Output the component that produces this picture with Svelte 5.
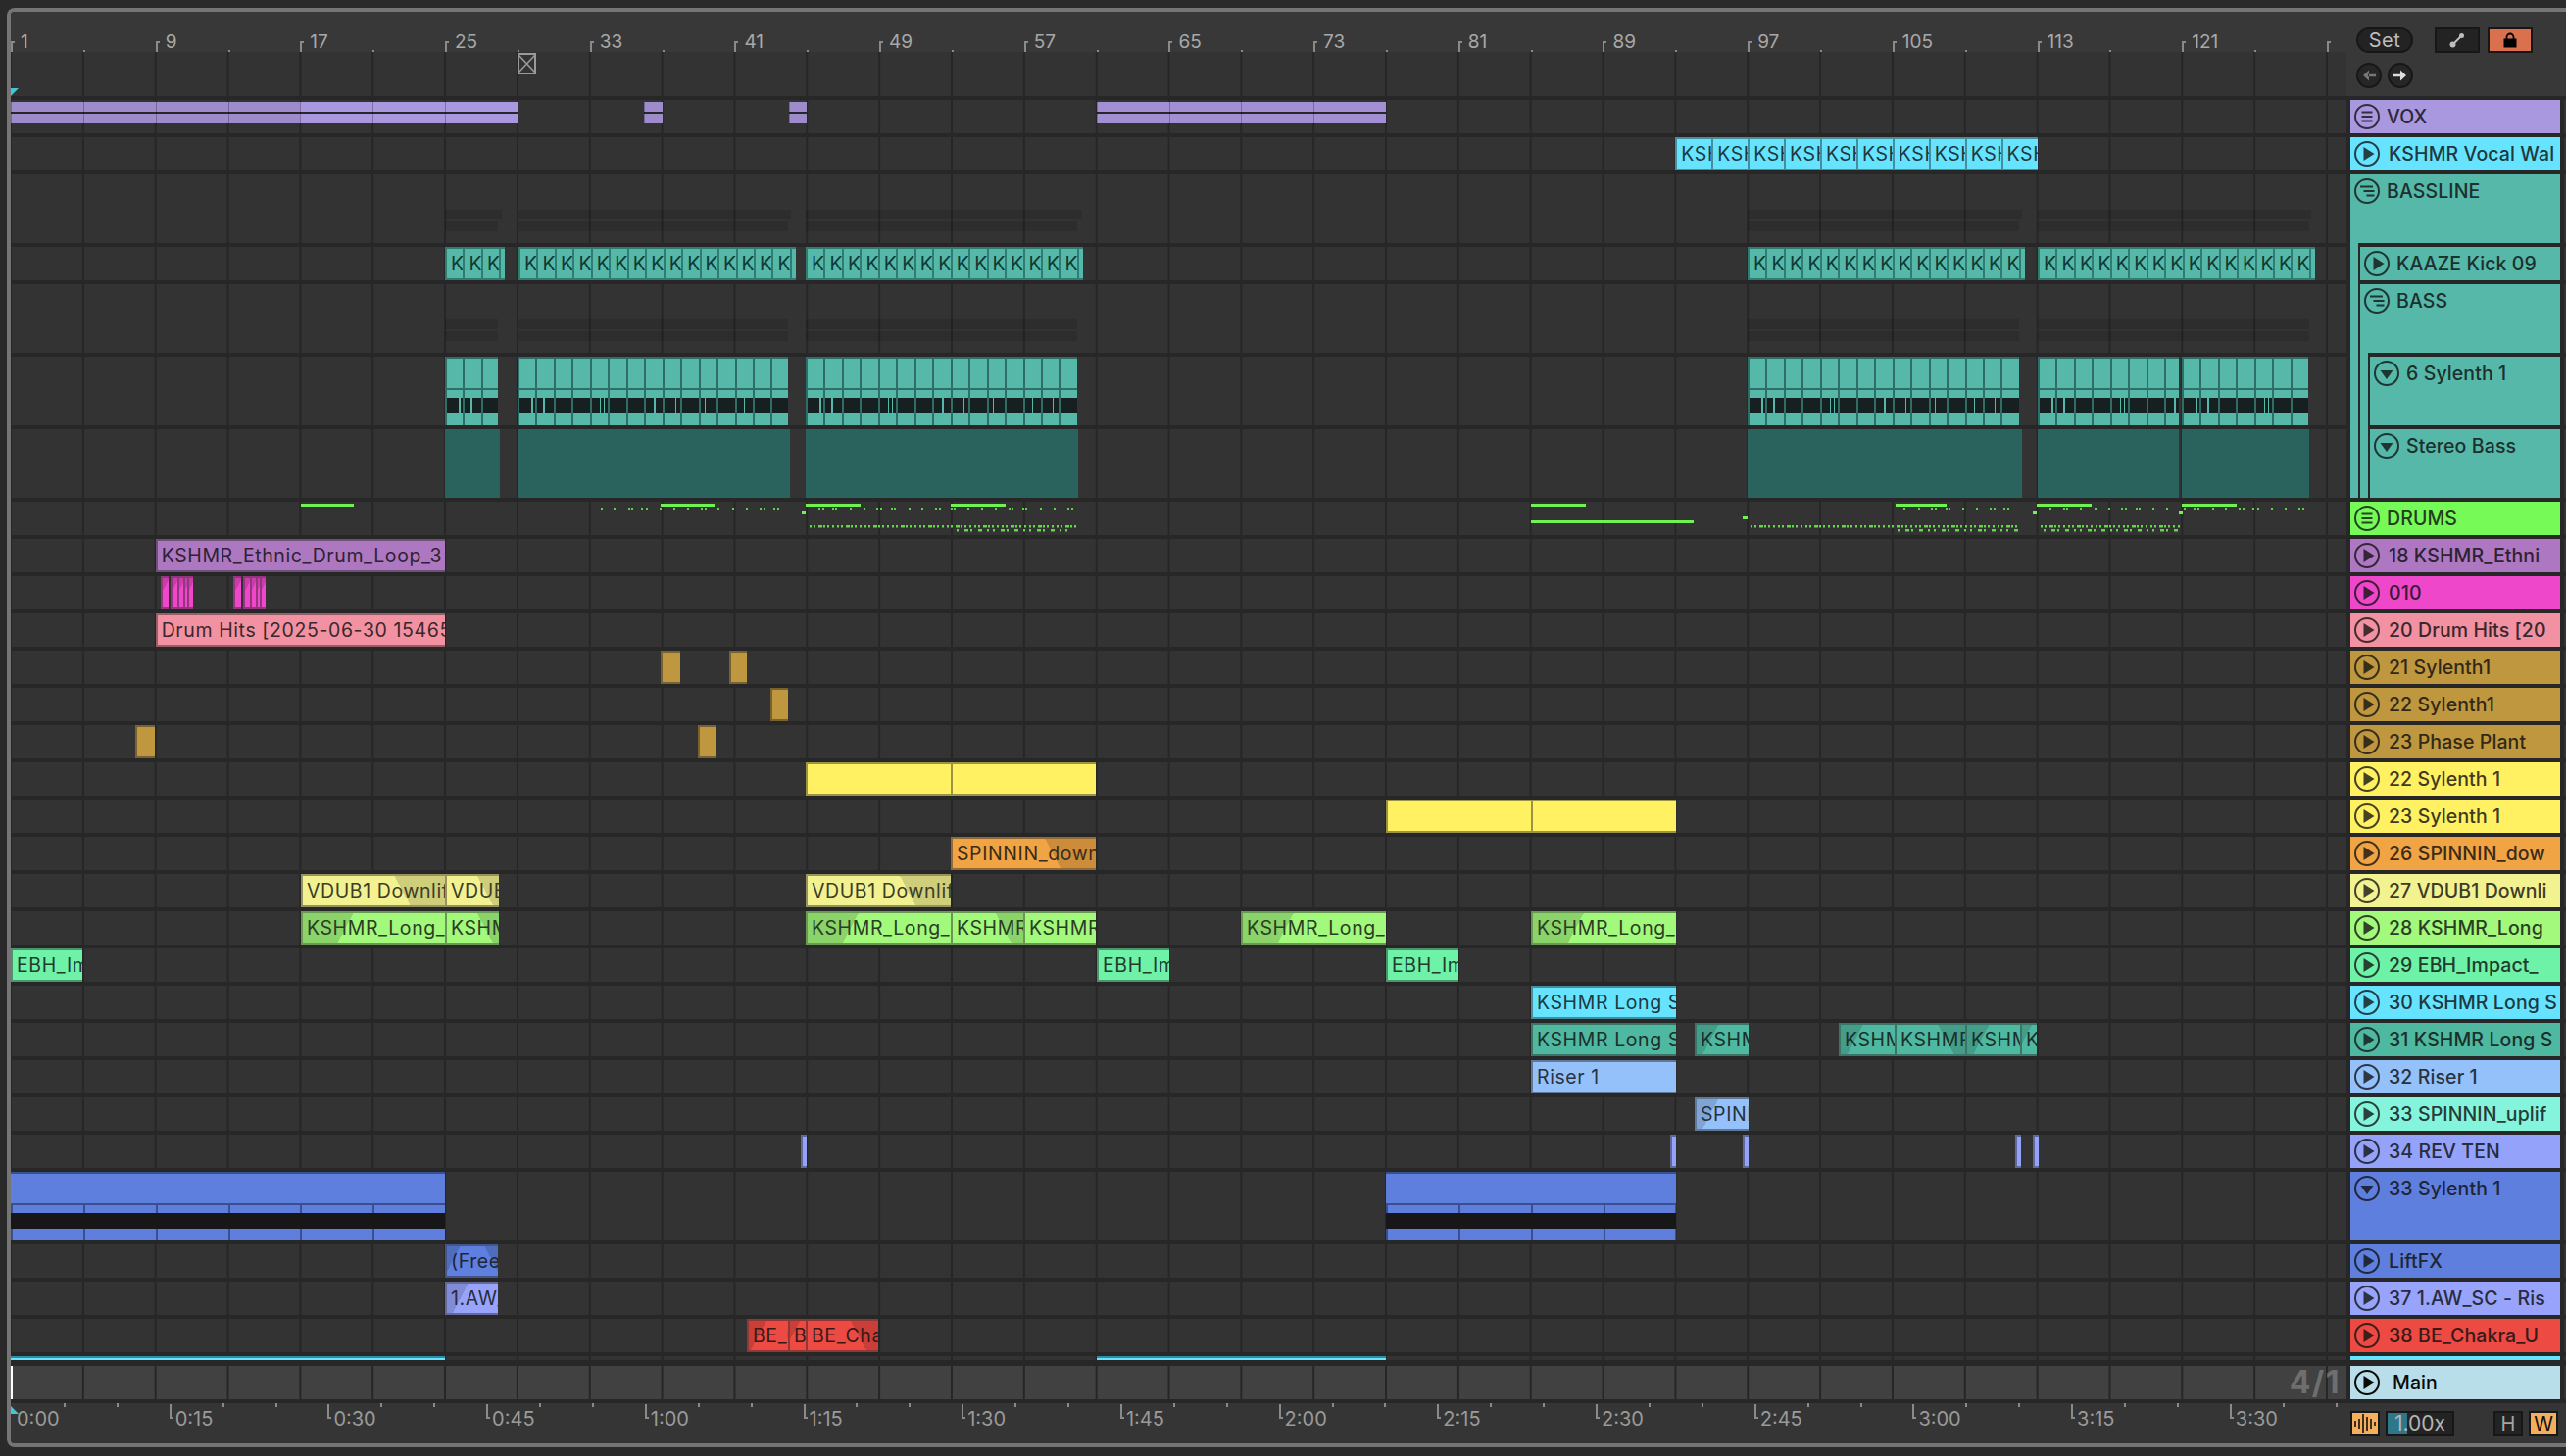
<script lang="ts">
	const BAR = 18.46
	const bar = (b: number) => 11 + (b - 1) * BAR
	const left = (x: number) => x - 11

	// splits a span on the 4-bar grid, so each piece can carry its own divider
	function split(x0: number, x1: number, step = 73.846) {
		const out: [number, number][] = []
		let a = x0
		let n = Math.floor((x0 - 11) / step) + 1
		while (a < x1) {
			const b = Math.min(11 + n * step, x1)
			if (b - a > 0.5) out.push([a, b])
			a = b
			n++
		}
		return out
	}
	function perBar(x0: number, x1: number) {
		const out: [number, number][] = []
		for (let a = x0; a < x1 - 1; a += BAR) out.push([a, Math.min(a + BAR, x1)])
		return out
	}

	const kick = [[454, 512], [529, 807], [822, 1104], [1783, 2063], [2079, 2358]]
	const bassA = [[454, 508], [528, 804], [822, 1099], [1783, 2060], [2079, 2356]]
	const bassClips = [[454, 508], [528, 804], [822, 1099], [1783, 2060], [2079, 2223], [2226, 2356]]
	const stereo = [[454, 510], [528, 806], [822, 1100], [1783, 2063], [2079, 2223], [2226, 2356]]

	const CYAN = '#66e4ff'
	const TEAL = '#55b8a9'
	const GOLD = '#bf973e'
	const YEL = '#fff162'
	const BLUE = '#5e7fdd'

	type Clip = { a: number; b: number; t?: string; f?: string }
	type Row = {
		name: string
		c: string
		icon?: string
		tall?: boolean
		indent?: number
		rule?: number
		kind?: string
		clips?: Clip[]
		clipColor?: string
	}

	const kshmr = 'KSHMR Long Swell'
	const rows: Row[] = [
		{ name: 'VOX', c: '#a997df', icon: 'group', kind: 'vox' },
		{
			name: 'KSHMR Vocal Wal',
			c: CYAN,
			clips: Array.from({ length: 10 }, (_, i) => ({ a: bar(93 + i * 2), b: bar(95 + i * 2), t: 'KSHMR' })),
		},
		{ name: 'BASSLINE', c: TEAL, icon: 'stagger', tall: true, rule: 8, kind: 'shadow' },
		{ name: 'KAAZE Kick 09', c: TEAL, indent: 1, rule: 8, kind: 'kick' },
		{ name: 'BASS', c: TEAL, icon: 'stagger', tall: true, indent: 1, rule: 18, kind: 'shadow2' },
		{ name: '6 Sylenth 1', c: TEAL, icon: 'down', tall: true, indent: 2, rule: 18, kind: 'bass' },
		{ name: 'Stereo Bass', c: TEAL, icon: 'down', tall: true, indent: 2, kind: 'stereo' },
		{ name: 'DRUMS', c: '#76fa58', icon: 'group', kind: 'midi' },
		{
			name: '18 KSHMR_Ethni',
			c: '#ad78c1',
			clips: [{ a: bar(9), b: bar(25), t: 'KSHMR_Ethnic_Drum_Loop_3' }],
		},
		{
			name: '010',
			c: '#ee47c9',
			clips: [
				{ a: 164, b: 172, f: 'l' },
				{ a: 174, b: 181, f: 'l' },
				{ a: 181, b: 187, f: 'l' },
				{ a: 187, b: 191, f: 'l' },
				{ a: 191, b: 194, f: 'l' },
				{ a: 238, b: 246, f: 'l' },
				{ a: 248, b: 255, f: 'l' },
				{ a: 255, b: 261, f: 'l' },
				{ a: 261, b: 265, f: 'l' },
				{ a: 265, b: 268, f: 'l' },
			],
		},
		{
			name: '20 Drum Hits [20',
			c: '#f191a2',
			clips: [{ a: bar(9), b: bar(25), t: 'Drum Hits [2025-06-30 154652]' }],
		},
		{ name: '21 Sylenth1', c: GOLD, clips: [{ a: 674, b: 694 }, { a: 744, b: 762 }] },
		{ name: '22 Sylenth1', c: GOLD, clips: [{ a: 786, b: 804 }] },
		{ name: '23 Phase Plant', c: GOLD, clips: [{ a: 138, b: 158 }, { a: 712, b: 730 }] },
		{ name: '22 Sylenth 1', c: YEL, clips: [{ a: 822, b: 970 }, { a: 970, b: 1118 }] },
		{ name: '23 Sylenth 1', c: YEL, clips: [{ a: 1414, b: 1562 }, { a: 1562, b: 1710 }] },
		{
			name: '26 SPINNIN_dow',
			c: '#f0a444',
			clips: [{ a: 970, b: 1118, t: 'SPINNIN_downlifter', f: 'r' }],
		},
		{
			name: '27 VDUB1 Downli',
			c: '#f3f290',
			clips: [
				{ a: 307, b: 454, t: 'VDUB1 Downlifter', f: 'r' },
				{ a: 454, b: 509, t: 'VDUB1', f: 'r' },
				{ a: 822, b: 970, t: 'VDUB1 Downlifter', f: 'r' },
			],
		},
		{
			name: '28 KSHMR_Long',
			c: '#a2f97c',
			clips: [
				{ a: 307, b: 454, t: 'KSHMR_Long_Impact', f: 'l' },
				{ a: 454, b: 509, t: 'KSHMR', f: 'r' },
				{ a: 822, b: 970, t: 'KSHMR_Long_Impact', f: 'l' },
				{ a: 970, b: 1044, t: 'KSHMR_Long', f: 'r' },
				{ a: 1044, b: 1118, t: 'KSHMR_Long' },
				{ a: 1266, b: 1414, t: 'KSHMR_Long_Impact', f: 'l' },
				{ a: 1562, b: 1710, t: 'KSHMR_Long_Impact', f: 'l' },
			],
		},
		{
			name: '29 EBH_Impact_',
			c: '#6ef2a8',
			clips: [
				{ a: 11, b: 84, t: 'EBH_Impact' },
				{ a: 1119, b: 1193, t: 'EBH_Impact' },
				{ a: 1414, b: 1488, t: 'EBH_Impact' },
			],
		},
		{ name: '30 KSHMR Long S', c: CYAN, clips: [{ a: 1562, b: 1710, t: kshmr }] },
		{
			name: '31 KSHMR Long S',
			c: '#4fb8a0',
			clips: [
				{ a: 1562, b: 1710, t: kshmr },
				{ a: 1729, b: 1784, t: 'KSHMR', f: 'l' },
				{ a: 1876, b: 1933, t: 'KSHMR', f: 'l' },
				{ a: 1933, b: 2005, t: 'KSHMR', f: 'r' },
				{ a: 2005, b: 2061, t: 'KSHMR', f: 'l' },
				{ a: 2061, b: 2078, t: 'K', f: 'l' },
			],
		},
		{ name: '32 Riser 1', c: '#95c1fb', clips: [{ a: 1562, b: 1710, t: 'Riser 1' }] },
		{
			name: '33 SPINNIN_uplif',
			c: '#84f5dc',
			clipColor: '#95c1fb',
			clips: [{ a: 1729, b: 1784, t: 'SPINNIN', f: 'l' }],
		},
		{
			name: '34 REV TEN',
			c: '#94a3f9',
			clips: [
				{ a: 817, b: 821 },
				{ a: 1704, b: 1710 },
				{ a: 1778, b: 1784 },
				{ a: 2056, b: 2060 },
				{ a: 2074, b: 2078 },
			],
		},
		{ name: '33 Sylenth 1', c: BLUE, icon: 'down', tall: true, kind: 'synth' },
		{ name: 'LiftFX', c: BLUE, clips: [{ a: 454, b: 508, t: '(Free', f: 'both' }] },
		{ name: '37 1.AW_SC - Ris', c: '#98a4fb', clips: [{ a: 454, b: 508, t: '1.AW_SC', f: 'l' }] },
		{
			name: '38 BE_Chakra_U',
			c: '#ec4a42',
			clips: [
				{ a: 762, b: 804, t: 'BE_Chakra', f: 'l' },
				{ a: 804, b: 822, t: 'BE', f: 'l' },
				{ a: 822, b: 896, t: 'BE_Chakra_Up', f: 'r' },
			],
		},
	]

	// midi preview on the DRUMS lane, x values read off the arrangement
	const longNotes = [
		[307, 361, 514], [674, 729, 514], [822, 878, 514], [970, 1026, 514],
		[1562, 1618, 514], [1934, 1986, 514], [2078, 2134, 514], [2226, 2282, 514],
		[1562, 1728, 531], [818, 822, 522], [1778, 1783, 527], [2074, 2078, 522], [2223, 2227, 522],
	]
	const sparse = [
		613, 626, 641, 644, 654, 659, 673, 687, 701, 715, 719, 732, 747, 761, 775, 779, 789, 793,
		835, 839, 849, 852, 867, 881, 894, 898, 909, 912, 927, 940, 954, 958, 970, 973, 987, 1001, 1015, 1029, 1032,
		1043, 1046, 1061, 1075, 1089, 1093,
		1942, 1957, 1970, 1974, 1985, 1988, 2002, 2016, 2030, 2034, 2044, 2048,
		2091, 2105, 2108, 2122, 2137, 2151, 2164, 2168, 2179, 2182, 2196, 2210,
		2228, 2238, 2242, 2257, 2270, 2284, 2288, 2298, 2303, 2317, 2331, 2345, 2349,
	]
	function pattern(x0: number, x1: number, y: number, period: number, steps: [number, number][]) {
		const out: [number, number, number][] = []
		for (let p = x0; p < x1; p += period) {
			for (const [o, w] of steps) if (p + o + w <= x1) out.push([p + o, w, y])
		}
		return out
	}
	const dense: [number, number][] = [[0, 2], [4, 2], [9, 4], [14, 2], [18, 2], [23, 2]]
	const offbeat: [number, number][] = [[0, 2], [8, 4], [14, 2], [22, 4], [31, 2]]
	const notes = [
		...pattern(826, 1100, 536, 28, dense),
		...pattern(1786, 2060, 536, 28, dense),
		...pattern(2082, 2224, 536, 28, dense),
		...pattern(976, 1098, 540, 37, offbeat),
		...pattern(1936, 2060, 540, 37, offbeat),
		...pattern(2085, 2224, 540, 37, offbeat),
	]

	const barLabels = Array.from({ length: 16 }, (_, i) => 1 + i * 8)
	const fourBars = Array.from({ length: 32 }, (_, i) => i)
	const times = [
		'0:00', '0:15', '0:30', '0:45', '1:00', '1:15', '1:30', '1:45',
		'2:00', '2:15', '2:30', '2:45', '3:00', '3:15', '3:30',
	]
	const minor = Array.from({ length: 44 }, (_, i) => i + 1).filter((i) => i % 3 !== 0)
</script>

{#snippet icon(kind: string | undefined, stroke: string)}
	<svg class="ico" viewBox="0 0 26 26" fill="none" stroke={stroke} stroke-width="2">
		<circle cx="13" cy="13" r="12" />
		{#if kind === 'group'}
			<path d="M7.500 8.500h11M7.500 13h11M7.500 17.500h11" stroke-width="2.200" />
		{:else if kind === 'stagger'}
			<path d="M6 8.500h13M9.500 13h11M12.500 17.500h8" stroke-width="2.200" />
		{:else if kind === 'down'}
			<path d="M6.500 10h13l-6.500 9z" fill={stroke} stroke="none" />
		{:else}
			<path d="M9.500 6v14l11-7z" fill={stroke} stroke="none" />
		{/if}
	</svg>
{/snippet}

<div class="frame">
	<div class="top">
		<div class="timeline">
			<div class="ruler">
				{#each barLabels as b}
					<span class="bar-tick" style="left:{left(bar(b))}px"></span>
					<span class="bar-num" style="left:{left(bar(b)) + 10}px">{b}</span>
				{/each}
				{#each fourBars as i}
					{#if i % 2}
						<span class="small-tick" style="left:{left(bar(1 + i * 4))}px"></span>
					{/if}
				{/each}
				<span class="bar-tick" style="left:{left(bar(129))}px"></span>
			</div>
			<div class="locators grid">
				<svg class="marker" viewBox="0 0 19 22" fill="none" stroke="#9a9a9a" stroke-width="2">
					<path d="M1 1h17v20H1z" />
					<path d="M1 2l17 18M18 2L1 20" stroke-width="1.600" />
				</svg>
				<span class="start-flag"></span>
			</div>
		</div>
		<div class="ctrl">
			<div class="ctrl-row">
				<span class="set">Set</span>
				<span class="tool expand">
					<svg viewBox="0 0 16 16" width="16" height="16">
						<path d="M3.500 12.500L12.500 3.500" stroke="#bdbdbd" stroke-width="2" />
						<circle cx="3.500" cy="12.500" r="3" fill="#bdbdbd" />
						<circle cx="12.500" cy="3.500" r="2.500" fill="#bdbdbd" />
					</svg>
				</span>
				<span class="tool lock">
					<svg viewBox="0 0 16 16" width="16" height="16">
						<path d="M4.500 7V5a3.500 3.500 0 0 1 7 0v2" fill="none" stroke="#000" stroke-width="1.800" />
						<rect x="1.500" y="6.500" width="13" height="9" fill="#000" />
					</svg>
				</span>
			</div>
			<div class="ctrl-row arrows">
				<span class="round">
					<svg viewBox="0 0 16 16" width="16" height="16"><path d="M8 2.500L2 8l6 5.500zM7 6.700h8v2.600H7z" fill="#777" /></svg>
				</span>
				<span class="round">
					<svg viewBox="0 0 16 16" width="16" height="16"><path d="M8 2.500L14 8l-6 5.500zM1 6.700h8v2.600H1z" fill="#ddd" /></svg>
				</span>
			</div>
		</div>
	</div>

	{#each rows as r}
		<div class="row" class:tall={r.tall}>
			<div class="lane grid">
				{#if r.kind === 'vox'}
					{#each [[bar(1), bar(17), '#9d8bcb'], [bar(17), bar(29), '#a997df'], [bar(36), bar(37), '#9d8bcb'], [bar(44), bar(45), '#9d8bcb'], [bar(61), bar(77), '#a28fd4']] as [a, b, c]}
						{#each split(a as number, b as number) as [s, e]}
							<span class="twin" style="left:{left(s)}px;width:{e - s}px;--c:{c}"></span>
						{/each}
					{/each}
				{:else if r.kind === 'shadow' || r.kind === 'shadow2'}
					{#each kick as [a, b], i}
						<span class="ghost" style="left:{left(a)}px;width:{(r.kind === 'shadow' ? b : bassA[i][1]) - a}px"></span>
						<span class="ghost second" style="left:{left(a)}px;width:{bassA[i][1] - a}px"></span>
					{/each}
				{:else if r.kind === 'kick'}
					{#each kick as [a, b]}
						{#each perBar(a, b) as [s, e]}
							<span class="clip kick" style="left:{left(s)}px;width:{e - s}px;--c:{TEAL}">K</span>
						{/each}
					{/each}
				{:else if r.kind === 'bass'}
					{#each bassClips as [a, b]}
						{#each perBar(a, b) as [s, e], n}
							<span class="bass" style="left:{left(s)}px;width:{e - s}px">
								{#if n % 3 === 1}<i class="sliver" style="left:{4 + (n % 5) * 2}px"></i>{/if}
								{#if n % 4 === 0}<i class="sliver" style="left:{12 - (n % 7)}px"></i>{/if}
							</span>
						{/each}
					{/each}
				{:else if r.kind === 'stereo'}
					{#each stereo as [a, b]}
						<span class="stereo" style="left:{left(a)}px;width:{b - a}px"></span>
					{/each}
				{:else if r.kind === 'midi'}
					<svg class="notes" width="2383" height="34" viewBox="11 512 2383 34">
						{#each longNotes as [a, b, y]}
							<rect x={a} y={y} width={b - a} height="3" fill="#71f252" />
						{/each}
						{#each sparse as x}
							<rect x={x} y="518" width="2" height="3" fill="#5fd043" />
						{/each}
						{#each notes as [x, w, y]}
							<rect x={x} y={y} width={w} height="2.500" fill="#62d846" />
						{/each}
					</svg>
				{:else if r.kind === 'synth'}
					{#each [[11, 454], [1414, 1710]] as [a, b]}
						{#each split(a, b) as [s, e]}
							<span class="synth" style="left:{left(s)}px;width:{e - s}px"></span>
						{/each}
					{/each}
				{:else if r.clips}
					{#each r.clips as k}
						<span
							class="clip"
							class:fade-l={k.f === 'l' || k.f === 'both'}
							class:fade-r={k.f === 'r' || k.f === 'both'}
							style="left:{left(k.a)}px;width:{k.b - k.a}px;--c:{r.clipColor ?? r.c}"
						>{k.t ?? ''}</span>
					{/each}
				{/if}
			</div>
			<div class="head" style="--c:{r.c};--rule:{r.rule ?? 0}px">
				{#each Array(r.indent ?? 0) as _}
					<span class="guide"></span>
				{/each}
				<div class="cell" class:is-group={r.icon === 'group' || r.icon === 'stagger'} class:nested={r.indent}>
					{@render icon(r.icon, `color-mix(in srgb, ${r.c} 22%, #101010)`)}
					<span class="name">{r.name}</span>
				</div>
			</div>
			<div class="tail"></div>
		</div>
	{/each}

	<div class="row sliver-row">
		<div class="lane grid">
			<span class="clip strip" style="left:0;width:443px;--c:{CYAN}"></span>
			<span class="clip strip" style="left:{left(1119)}px;width:295px;--c:{CYAN}"></span>
		</div>
		<div class="head" style="--c:{CYAN};--rule:0px"></div>
		<div class="tail"></div>
	</div>

	<div class="row">
		<div class="lane grid main-lane">
			<span class="insert"></span>
			<span class="grid-size">4/1</span>
		</div>
		<div class="head" style="--c:#b8dee9;--rule:0px">
			<div class="cell main-cell">
				{@render icon('play', '#0a0a0a')}
				<span class="name">Main</span>
			</div>
		</div>
		<div class="tail"></div>
	</div>

	<div class="bottom">
		<div class="timebar">
			<span class="time-flag"></span>
			{#each minor as i}
				<span class="small-tick time" style="left:{i * 53.9}px"></span>
			{/each}
			{#each times as t, i}
				{#if i}<span class="l-tick" style="left:{i * 161.7}px"></span>{/if}
				<span class="time-label" style="left:{i * 161.7 + 6}px">{t}</span>
			{/each}
		</div>
		<div class="foot">
			<span class="btn warn">
				<svg viewBox="0 0 24 20" width="24" height="20" stroke="#111" stroke-width="1.600">
					<path d="M2 7v6M6 5v10M10 0v20M14 3v14M18 5v10M22 8v4" />
				</svg>
			</span>
			<span class="zoom-box"><i></i><b>1.00x</b></span>
			<span class="spacer"></span>
			<span class="btn plain">H</span>
			<span class="btn warn">W</span>
		</div>
	</div>
</div>

<style>
	:global(body) {
		background: #2a2a2a;
		font-family: Inter, 'Liberation Sans', sans-serif;
	}

	.frame {
		box-sizing: border-box;
		margin: 8px 0 0 7px;
		border-top: 4px solid #757575;
		border-bottom: 4px solid #757575;
		border-left: 4px solid #757575;
		border-top-left-radius: 8px;
		border-bottom-left-radius: 8px;
		background: #272727;
		width: 2611px;
		height: 1469px;
		overflow: hidden;
	}

	.grid {
		background-color: #333;
		background-image: linear-gradient(90deg, #262626 2px, transparent 2px);
		background-position: -1px 0;
		background-size: 73.846px 100%;
	}

	/* top strip */
	.top {
		display: flex;
		box-sizing: border-box;
		border-bottom: 4px solid #272727;
		background: #383838;
		height: 90px;
	}

	.timeline {
		flex: none;
		width: 2383px;
	}

	.ruler {
		position: relative;
		height: 41px;
	}

	.bar-tick {
		position: absolute;
		top: 30px;
		border-top: 2px solid #8a8a8a;
		border-left: 2px solid #8a8a8a;
		width: 2px;
		height: 9px;
	}

	.bar-num {
		position: absolute;
		top: 20px;
		color: #a8a8a8;
		font-size: 19px;
		line-height: 22px;
	}

	.small-tick {
		position: absolute;
		top: 39px;
		background: #8a8a8a;
		width: 2px;
		height: 2px;
	}

	.locators {
		position: relative;
		height: 45px;
	}

	.marker {
		position: absolute;
		top: 1px;
		left: 517px;
		width: 19px;
		height: 22px;
	}

	.start-flag {
		position: absolute;
		bottom: 0;
		left: 0;
		clip-path: polygon(0 0, 100% 0, 0 100%);
		background: #46c5d6;
		width: 8px;
		height: 8px;
	}

	.ctrl {
		flex: 1;
		padding: 16px 0 0 10px;
	}

	.ctrl-row {
		display: flex;
		gap: 8px;
		align-items: center;
		height: 26px;
	}

	.arrows {
		gap: 6px;
		margin-top: 10px;
	}

	.set {
		box-sizing: border-box;
		margin-right: 14px;
		border: 2px solid #171717;
		border-radius: 13px;
		background: #232323;
		width: 58px;
		height: 26px;
		color: #bdbdbd;
		font-size: 20px;
		line-height: 22px;
		letter-spacing: 0.5px;
		text-align: center;
	}

	.tool {
		display: flex;
		justify-content: center;
		align-items: center;
		box-sizing: border-box;
		border: 2px solid #171717;
		width: 46px;
		height: 26px;
	}

	.expand {
		background: #232323;
	}

	.lock {
		background: #d9714e;
	}

	.round {
		display: flex;
		justify-content: center;
		align-items: center;
		box-sizing: border-box;
		border: 2px solid #171717;
		border-radius: 50%;
		background: #262626;
		width: 26px;
		height: 26px;
	}

	/* tracks */
	.row {
		display: flex;
		height: 38px;
	}

	.row.tall {
		height: 74px;
	}

	.lane {
		position: relative;
		flex: none;
		box-sizing: border-box;
		border-bottom: 4px solid #272727;
		width: 2383px;
		overflow: hidden;
	}

	.tail {
		flex: 1;
		margin-left: 4px;
		border-bottom: 4px solid #272727;
		background: #333;
	}

	.head {
		display: flex;
		position: relative;
		flex: none;
		align-items: flex-start;
		margin-left: 4px;
		background: var(--c);
		width: 214px;
	}

	.head::after {
		position: absolute;
		right: 0;
		bottom: 0;
		left: var(--rule);
		background: #272727;
		height: 4px;
		content: '';
	}

	.guide {
		box-sizing: border-box;
		flex: none;
		align-self: stretch;
		border-right: 2px solid #272727;
		width: 10px;
	}

	.cell {
		display: flex;
		flex: 1;
		gap: 9px;
		align-items: center;
		padding-left: 4px;
		height: 34px;
		min-width: 0;
	}

	.cell.is-group,
	.cell.nested {
		gap: 7px;
	}

	.main-cell {
		gap: 13px;
	}

	.ico {
		display: block;
		flex: none;
		width: 26px;
		height: 26px;
	}

	.name {
		overflow: hidden;
		color: color-mix(in srgb, var(--c) 20%, #0e0e0e);
		font-weight: 550;
		font-size: 19.500px;
		letter-spacing: 0.1px;
		white-space: nowrap;
	}

	.main-cell .name {
		color: #0a0a0a;
	}

	/* clips */
	.clip {
		position: absolute;
		top: 0;
		bottom: 0;
		box-sizing: border-box;
		border: 2px solid color-mix(in srgb, var(--c) 55%, #222);
		border-right: 0;
		background-color: var(--c);
		padding-left: 4px;
		overflow: hidden;
		color: color-mix(in srgb, var(--c) 20%, #0e0e0e);
		font-size: 19.500px;
		line-height: 31px;
		letter-spacing: 0.6px;
		white-space: nowrap;
	}

	.fade-l {
		background-image: linear-gradient(118deg, rgb(0 0 0 / 0.15) 32%, transparent 32%);
	}

	.fade-r {
		background-image: linear-gradient(62deg, transparent 68%, rgb(0 0 0 / 0.15) 68%);
	}

	.fade-l.fade-r {
		background-image:
			linear-gradient(118deg, rgb(0 0 0 / 0.15) 20%, transparent 20%),
			linear-gradient(62deg, transparent 80%, rgb(0 0 0 / 0.15) 80%);
	}

	.kick {
		border-color: #2f7c70;
		padding-left: 4px;
		color: #103a34;
	}

	.strip {
		top: 0;
		bottom: 0;
		border-width: 2px 0 0;
		border-color: #2f8d9f;
		padding: 0;
	}

	.twin {
		position: absolute;
		top: 2px;
		box-sizing: border-box;
		border-left: 1.500px solid rgb(0 0 0 / 0.25);
		background: linear-gradient(var(--c) 10px, #272727 10px 12px, var(--c) 12px);
		height: 22px;
	}

	.ghost {
		position: absolute;
		top: 36px;
		background: rgb(0 0 0 / 0.11);
		height: 10px;
	}

	.ghost.second {
		top: 48px;
	}

	.bass {
		position: absolute;
		top: 0;
		bottom: 0;
		box-sizing: border-box;
		border-top: 2px solid #2f6e66;
		border-left: 2px solid #2f6e66;
		background:
			linear-gradient(#172020, #172020) 0 40px / 100% 16px no-repeat,
			linear-gradient(#2f6e66, #2f6e66) 0 30px / 100% 2px no-repeat,
			#55b8a9;
	}

	.sliver {
		position: absolute;
		top: 40px;
		background: #55b8a9;
		width: 1.500px;
		height: 16px;
	}

	.stereo {
		position: absolute;
		top: 0;
		bottom: 0;
		background: #2a625e;
	}

	.notes {
		display: block;
		position: absolute;
		top: 0;
		left: 0;
	}

	.synth {
		position: absolute;
		top: 0;
		bottom: 0;
		box-sizing: border-box;
		border-top: 2px solid #3a4f8e;
		background:
			linear-gradient(#171717, #171717) 0 40px / 100% 16px no-repeat,
			linear-gradient(#3a4f8e, #3a4f8e) 0 30px / 100% 2px no-repeat,
			linear-gradient(#3a4f8e, #3a4f8e) 0 32px / 2px 100% no-repeat,
			#5e7fdd;
	}

	.sliver-row {
		height: 10px;
	}

	.sliver-row .lane {
		border-bottom-width: 6px;
	}

	.sliver-row .tail {
		border-bottom-width: 6px;
	}

	.sliver-row .head::after {
		height: 6px;
	}

	.main-lane {
		background-color: #414141;
		overflow: hidden;
	}

	.insert {
		position: absolute;
		top: 0;
		bottom: 0;
		left: 0;
		background: #fff;
		width: 2px;
	}

	.grid-size {
		position: absolute;
		top: 0;
		right: 6px;
		color: #6e6e6e;
		font-weight: 700;
		font-size: 32px;
		line-height: 34px;
		letter-spacing: 1.500px;
	}

	/* bottom strip */
	.bottom {
		display: flex;
		background: #353535;
		height: 41px;
	}

	.timebar {
		position: relative;
		flex: none;
		width: 2383px;
	}

	.small-tick.time {
		top: 0;
		background: #8a8a8a;
		height: 4px;
	}

	.time-flag {
		position: absolute;
		top: 3px;
		left: 0;
		clip-path: polygon(0 0, 100% 100%, 0 100%);
		background: #46c5d6;
		width: 8px;
		height: 8px;
	}

	.l-tick {
		position: absolute;
		top: 1px;
		border-bottom: 2px solid #8a8a8a;
		border-left: 2px solid #8a8a8a;
		width: 2px;
		height: 13px;
	}

	.time-label {
		position: absolute;
		top: 4px;
		color: #9a9a9a;
		font-size: 20px;
		line-height: 24px;
	}

	.foot {
		display: flex;
		flex: 1;
		gap: 6px;
		align-items: flex-start;
		padding: 8px 8px 0 4px;
	}

	.btn {
		display: flex;
		justify-content: center;
		align-items: center;
		box-sizing: border-box;
		border: 2px solid #171717;
		width: 30px;
		height: 26px;
		font-size: 20px;
	}

	.warn {
		background: #f4ae5c;
		color: #111;
	}

	.plain {
		background: #232323;
		color: #a5a5a5;
	}

	.zoom-box {
		display: block;
		position: relative;
		box-sizing: border-box;
		border: 2px solid #171717;
		background: #232323;
		width: 70px;
		height: 26px;
	}

	.zoom-box i {
		display: block;
		background: #2e7788;
		width: 20px;
		height: 100%;
	}

	.zoom-box b {
		position: absolute;
		top: 0;
		left: 7px;
		color: #b5b5b5;
		font-weight: 400;
		font-size: 21px;
		line-height: 22px;
	}

	.spacer {
		flex: 1;
	}
</style>
